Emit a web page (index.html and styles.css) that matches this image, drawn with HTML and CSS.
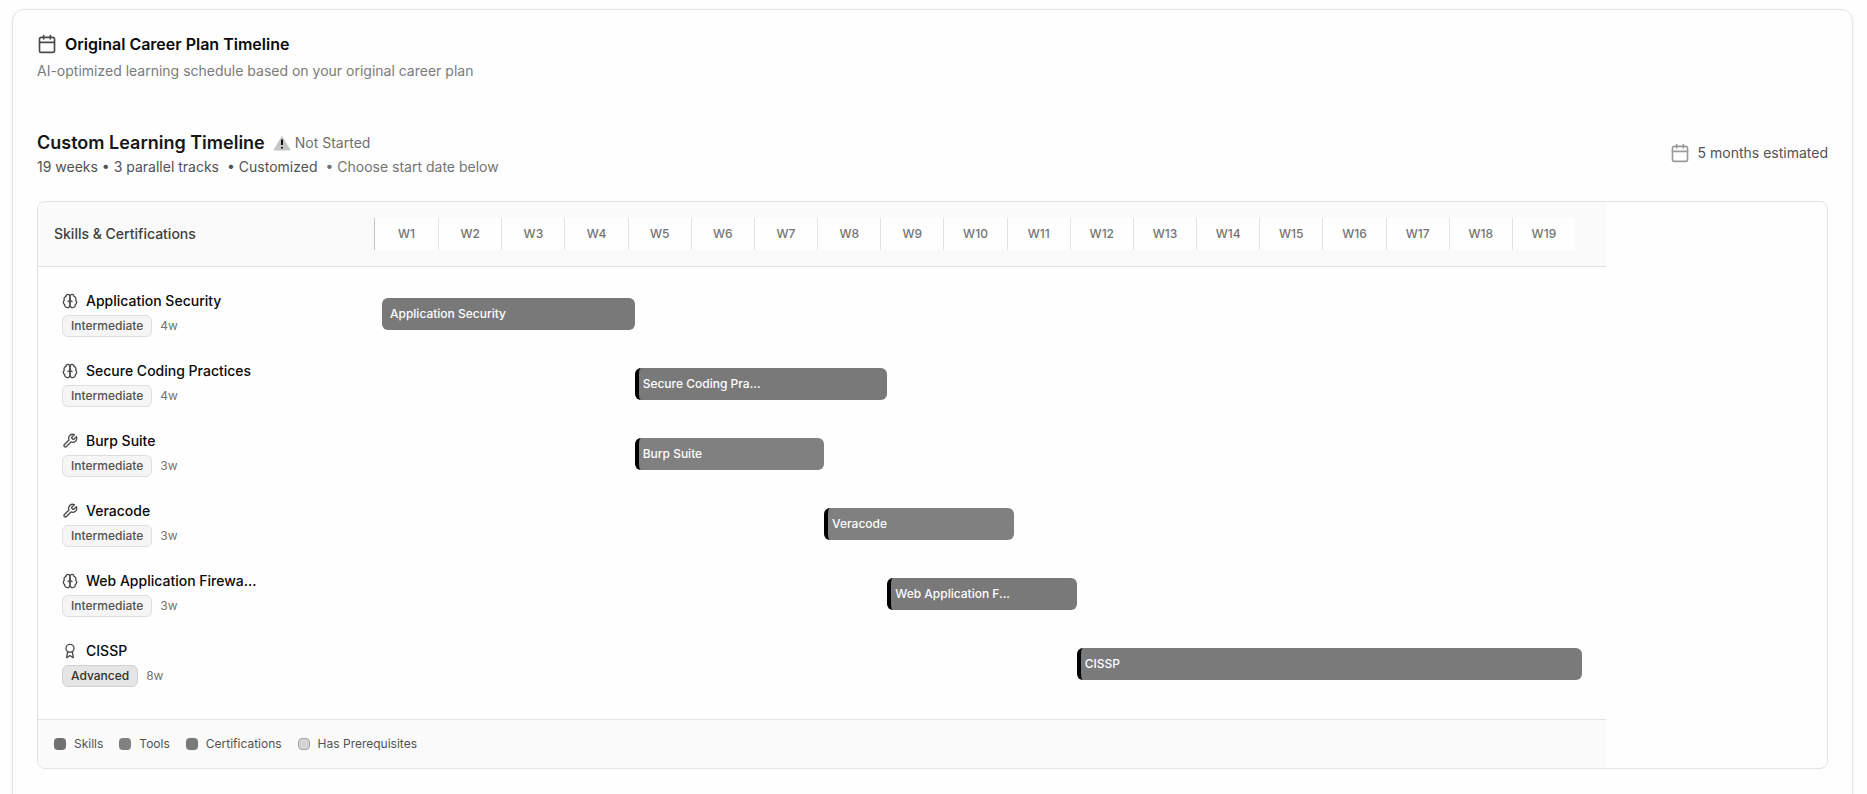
FILE: index.html
```html
<!DOCTYPE html>
<html lang="en">
<head>
<meta charset="UTF-8">
<meta name="viewport" content="width=device-width, initial-scale=1.0">
<title>Original Career Plan Timeline</title>
<link rel="stylesheet" href="styles.css">
</head>
<body>

<!-- Shared icons -->
<svg class="sprite" aria-hidden="true">
    <symbol id="calendar" viewBox="0 0 24 24">
        <path d="M8 2v4M16 2v4M3 10h18"/>
        <rect x="3" y="4" width="18" height="18" rx="2"/>
    </symbol>
    <symbol id="brain" viewBox="0 0 24 24">
        <path d="M12 5a3 3 0 1 0-5.997.125 4 4 0 0 0-2.526 5.77 4 4 0 0 0 .556 6.588A4 4 0 1 0 12 18Z"/>
        <path d="M12 5a3 3 0 1 1 5.997.125 4 4 0 0 1 2.526 5.77 4 4 0 0 1-.556 6.588A4 4 0 1 1 12 18Z"/>
        <path d="M15 13a4.5 4.5 0 0 1-3-4 4.5 4.5 0 0 1-3 4"/>
    </symbol>
    <symbol id="wrench" viewBox="0 0 24 24">
        <path d="M14.7 6.3a1 1 0 0 0 0 1.4l1.6 1.6a1 1 0 0 0 1.4 0l3.77-3.77a6 6 0 0 1-7.94 7.94l-6.91 6.91a2.12 2.12 0 0 1-3-3l6.91-6.91a6 6 0 0 1 7.94-7.94l-3.76 3.76z"/>
    </symbol>
    <symbol id="award" viewBox="0 0 24 24">
        <circle cx="12" cy="8" r="6"/>
        <path d="m15.477 12.89 1.515 8.526a.5.5 0 0 1-.81.47l-3.58-2.687a1 1 0 0 0-1.197 0l-3.586 2.686a.5.5 0 0 1-.81-.469l1.514-8.526"/>
    </symbol>
</svg>

<main class="card">
    <header class="card-header">
        <h1><svg class="icon icon-lg"><use href="#calendar"/></svg>Original Career Plan Timeline</h1>
        <p>AI-optimized learning schedule based on your original career plan</p>
    </header>

    <section class="summary">
        <div>
            <div class="summary-title">
                <h2>Custom Learning Timeline</h2>
                <span class="status">
                    <svg class="warning" viewBox="0 0 18 16" aria-hidden="true">
                        <path class="warning-sign" d="M9 1.5 17 15H1z"/>
                        <path class="warning-mark" d="M9 4.5v5.5M9 12v1.6"/>
                    </svg>
                    Not Started
                </span>
            </div>
            <p class="meta">
                <span>19 weeks • 3 parallel tracks</span>
                <span>• Customized</span>
                <span class="meta-hint">• Choose start date below</span>
            </p>
        </div>
        <div class="estimate"><svg class="icon icon-lg"><use href="#calendar"/></svg>5 months estimated</div>
    </section>

    <section class="chart">
        <div class="chart-inner">
            <div class="chart-head">
                <div class="chart-label">Skills &amp; Certifications</div>
                <div class="weeks">
                    <span>W1</span><span>W2</span><span>W3</span><span>W4</span><span>W5</span>
                    <span>W6</span><span>W7</span><span>W8</span><span>W9</span><span>W10</span>
                    <span>W11</span><span>W12</span><span>W13</span><span>W14</span><span>W15</span>
                    <span>W16</span><span>W17</span><span>W18</span><span>W19</span>
                </div>
            </div>

            <div class="rows">
                <div class="row">
                    <div class="item">
                        <h3><svg class="icon"><use href="#brain"/></svg>Application Security</h3>
                        <div class="details"><span class="badge">Intermediate</span>4w</div>
                    </div>
                    <div class="track">
                        <div class="bar" style="grid-column: 1 / span 4">Application Security</div>
                    </div>
                </div>
                <div class="row">
                    <div class="item">
                        <h3><svg class="icon"><use href="#brain"/></svg>Secure Coding Practices</h3>
                        <div class="details"><span class="badge">Intermediate</span>4w</div>
                    </div>
                    <div class="track">
                        <div class="bar dependent" style="grid-column: 5 / span 4">Secure Coding Pra...</div>
                    </div>
                </div>
                <div class="row">
                    <div class="item">
                        <h3><svg class="icon"><use href="#wrench"/></svg>Burp Suite</h3>
                        <div class="details"><span class="badge">Intermediate</span>3w</div>
                    </div>
                    <div class="track">
                        <div class="bar tool dependent" style="grid-column: 5 / span 3">Burp Suite</div>
                    </div>
                </div>
                <div class="row">
                    <div class="item">
                        <h3><svg class="icon"><use href="#wrench"/></svg>Veracode</h3>
                        <div class="details"><span class="badge">Intermediate</span>3w</div>
                    </div>
                    <div class="track">
                        <div class="bar tool dependent" style="grid-column: 8 / span 3">Veracode</div>
                    </div>
                </div>
                <div class="row">
                    <div class="item">
                        <h3><svg class="icon"><use href="#brain"/></svg>Web Application Firewa...</h3>
                        <div class="details"><span class="badge">Intermediate</span>3w</div>
                    </div>
                    <div class="track">
                        <div class="bar dependent" style="grid-column: 9 / span 3">Web Application F...</div>
                    </div>
                </div>
                <div class="row">
                    <div class="item">
                        <h3><svg class="icon"><use href="#award"/></svg>CISSP</h3>
                        <div class="details"><span class="badge advanced">Advanced</span>8w</div>
                    </div>
                    <div class="track">
                        <div class="bar cert dependent" style="grid-column: 12 / span 8">CISSP</div>
                    </div>
                </div>
            </div>

            <ul class="legend">
                <li><span class="swatch"></span>Skills</li>
                <li><span class="swatch tool"></span>Tools</li>
                <li><span class="swatch cert"></span>Certifications</li>
                <li><span class="swatch prereq"></span>Has Prerequisites</li>
            </ul>
        </div>
    </section>
</main>

</body>
</html>
```
FILE: styles.css
```css
* {
    box-sizing: border-box;
}

body {
    margin: 0;
    padding: 9px 14px 24px 12px;
    background-color: #fefefe;
    color: #0a0a0a;
    font-family: Inter, sans-serif;
    font-size: 14px;
    line-height: 20px;
}

h1, h2, h3, p, ul {
    margin: 0;
    padding: 0;
}

.sprite {
    display: none;
}

.icon {
    width: 16px;
    height: 16px;
    flex: none;
    fill: none;
    stroke: #4b4b4b;
    stroke-width: 2;
    stroke-linecap: round;
    stroke-linejoin: round;
}

.icon-lg {
    width: 20px;
    height: 20px;
}

/* Card */
.card {
    padding: 24px 24px 48px;
    border: 1px solid #e5e5e5;
    border-radius: 12px;
    background-color: #fefefe;
    box-shadow: 0 1px 3px rgba(0, 0, 0, 0.06);
}

.card-header h1 {
    display: flex;
    align-items: center;
    gap: 8px;
    font-size: 16px;
    font-weight: 600;
    line-height: 20px;
}

.card-header p {
    margin-top: 7px;
    color: #7b7b7b;
}

/* Summary */
.summary {
    display: flex;
    justify-content: space-between;
    align-items: center;
    margin: 48px 0 24px;
}

.summary-title {
    display: flex;
    align-items: center;
    gap: 8px;
}

.summary h2 {
    color: #171717;
    font-size: 18px;
    font-weight: 600;
    line-height: 28px;
}

.status {
    display: flex;
    align-items: center;
    gap: 4px;
    color: #6f6f6f;
}

.warning {
    width: 18px;
    height: 16px;
}

.warning-sign {
    fill: #c6c6c6;
    stroke: #c6c6c6;
    stroke-linejoin: round;
}

.warning-mark {
    stroke: #111;
    stroke-width: 2;
}

.meta {
    display: flex;
    gap: 8px;
    color: #525252;
}

.meta-hint {
    color: #737373;
}

.estimate {
    display: flex;
    align-items: center;
    gap: 8px;
    color: #525252;
}

.estimate .icon {
    stroke: #9b9b9b;
}

/* Chart */
.chart {
    overflow-x: auto;
    border: 1px solid #e2e2e2;
    border-radius: 8px;
}

.chart-inner {
    width: max-content;
}

.chart-head {
    display: flex;
    align-items: center;
    padding: 16px;
    border-bottom: 1px solid #e2e2e2;
    background-color: #fafafa;
}

.chart-label {
    width: 320px;
    color: #404040;
    font-weight: 500;
}

.weeks, .track {
    display: grid;
    grid-template-columns: repeat(19, 1fr);
    width: 1200px;
}

.weeks {
    box-sizing: content-box;
    border-left: 1px solid #c4c4c4;
    color: #737373;
    font-size: 12px;
    font-weight: 500;
    line-height: 32px;
    text-align: center;
}

.weeks span {
    border-left: 1px solid #e2e2e2;
    background-color: #fefefe;
}

.weeks span:first-child {
    border-left: none;
}

.rows {
    display: grid;
    gap: 24px;
    padding: 24px 24px 32px;
}

.row {
    display: flex;
    align-items: center;
}

.item {
    width: 320px;
}

.item h3 {
    display: flex;
    align-items: center;
    gap: 8px;
    font-size: 14px;
    font-weight: 500;
}

.details {
    display: flex;
    align-items: center;
    gap: 8px;
    margin-top: 4px;
    color: #737373;
    font-size: 12px;
}

.badge {
    padding: 2px 8px;
    border: 1px solid #dedede;
    border-radius: 6px;
    background-color: #f5f5f5;
    color: #525252;
    font-weight: 500;
    line-height: 16px;
}

.badge.advanced {
    border-color: #d0d0d0;
    background-color: #e5e5e5;
    color: #303030;
}

.bar {
    padding: 0 8px;
    border-radius: 6px;
    background-color: #797979;
    color: #fefefe;
    font-size: 12px;
    font-weight: 500;
    line-height: 32px;
    white-space: nowrap;
}

.bar.dependent {
    padding-left: 4px;
    border-left: 4px solid #000;
}

/* Legend */
.legend {
    display: flex;
    gap: 16px;
    padding: 16px;
    border-top: 1px solid #e2e2e2;
    background-color: #fafafa;
    color: #525252;
    font-size: 12px;
    line-height: 16px;
    list-style: none;
}

.legend li {
    display: flex;
    align-items: center;
    gap: 8px;
}

.swatch {
    width: 12px;
    height: 12px;
    border-radius: 4px;
    background-color: #707070;
}

.bar.tool, .swatch.tool {
    background-color: #808080;
}

.bar.cert, .swatch.cert {
    background-color: #7a7a7a;
}

.swatch.prereq {
    border: 1px solid #a0a0a0;
    background-color: #d4d4d4;
}
```
